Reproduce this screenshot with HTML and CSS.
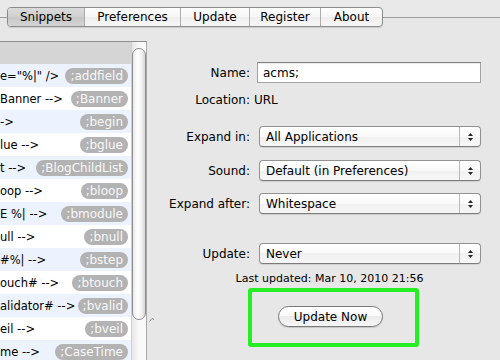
FILE: index.html
```html
<!DOCTYPE html>
<html>
<head>
<meta charset="utf-8">
<title>Snippets</title>
<link rel="stylesheet" href="styles.css">
</head>
<body>
<div class="window">
  <div class="box">
    <div class="tabs">
      <div class="tab t1 sel">Snippets</div>
      <div class="tab t2">Preferences</div>
      <div class="tab t3">Update</div>
      <div class="tab t4">Register</div>
      <div class="tab t5">About</div>
    </div>
    <div class="main">
      <div class="list">
        <div class="rows">
          <div class="row sel"></div>
          <div class="row"><span class="snip">e="%|" /&gt;</span><span class="pill">;addfield</span></div>
          <div class="row"><span class="snip">Banner --&gt;</span><span class="pill">;Banner</span></div>
          <div class="row"><span class="snip">-&gt;</span><span class="pill">;begin</span></div>
          <div class="row"><span class="snip">lue --&gt;</span><span class="pill">;bglue</span></div>
          <div class="row"><span class="snip">t --&gt;</span><span class="pill">;BlogChildList</span></div>
          <div class="row"><span class="snip">oop --&gt;</span><span class="pill">;bloop</span></div>
          <div class="row"><span class="snip">E %| --&gt;</span><span class="pill">;bmodule</span></div>
          <div class="row"><span class="snip">ull --&gt;</span><span class="pill">;bnull</span></div>
          <div class="row"><span class="snip">#%| --&gt;</span><span class="pill">;bstep</span></div>
          <div class="row"><span class="snip">ouch# --&gt;</span><span class="pill">;btouch</span></div>
          <div class="row"><span class="snip">alidator# --&gt;</span><span class="pill">;bvalid</span></div>
          <div class="row"><span class="snip">eil --&gt;</span><span class="pill">;bveil</span></div>
          <div class="row"><span class="snip">me --&gt;</span><span class="pill">;CaseTime</span></div>
        </div>
        <div class="scroll"><div class="thumb"></div></div>
      </div>
      <div class="splitter">
        <svg class="grip" width="6" height="5" viewBox="0 0 6 5"><path d="M0.5 4.5 L3 1.5 L5 2.5" fill="none" stroke="#8a8a8a" stroke-width="1"/></svg>
      </div>
      <div class="form">
        <div class="frow r-name">
          <div class="label">Name:</div>
          <div class="field">acms;</div>
        </div>
        <div class="frow r-loc">
          <div class="label">Location:</div>
          <div class="value">URL</div>
        </div>
        <div class="frow r-expand">
          <div class="label">Expand in:</div>
          <div class="popup"><div class="ptext">All Applications</div><div class="parrows"><svg width="7" height="10" viewBox="0 0 7 10"><path d="M1 4 L3.5 1 L6 4 Z M1 6 L3.5 9 L6 6 Z" fill="#222"/></svg></div></div>
        </div>
        <div class="frow r-sound">
          <div class="label">Sound:</div>
          <div class="popup"><div class="ptext">Default (in Preferences)</div><div class="parrows"><svg width="7" height="10" viewBox="0 0 7 10"><path d="M1 4 L3.5 1 L6 4 Z M1 6 L3.5 9 L6 6 Z" fill="#222"/></svg></div></div>
        </div>
        <div class="frow r-after">
          <div class="label">Expand after:</div>
          <div class="popup"><div class="ptext">Whitespace</div><div class="parrows"><svg width="7" height="10" viewBox="0 0 7 10"><path d="M1 4 L3.5 1 L6 4 Z M1 6 L3.5 9 L6 6 Z" fill="#222"/></svg></div></div>
        </div>
        <div class="frow r-update">
          <div class="label">Update:</div>
          <div class="popup"><div class="ptext">Never</div><div class="parrows"><svg width="7" height="10" viewBox="0 0 7 10"><path d="M1 4 L3.5 1 L6 4 Z M1 6 L3.5 9 L6 6 Z" fill="#222"/></svg></div></div>
        </div>
        <div class="last">Last updated: Mar 10, 2010 21:56</div>
        <div class="highlight">
          <div class="button">Update Now</div>
        </div>
      </div>
    </div>
  </div>
</div>
</body>
</html>
```
FILE: styles.css
```css
* { box-sizing: border-box; }
html, body { margin: 0; padding: 0; }
body {
  width: 500px;
  height: 360px;
  overflow: hidden;
  background: #e9e9e9;
  font-family: "DejaVu Sans", "Liberation Sans", sans-serif;
  font-size: 12px;
  color: #000;
}
.window { padding-top: 17px; }
.box {
  border-top: 1px solid #9d9d9d;
  background: #e7e7e7;
  height: 343px;
}
.tabs {
  display: flex;
  margin: -11px 0 0 7px;
  width: 376px;
  height: 20px;
  border: 1px solid #8c8c8c;
  border-radius: 4px;
  background: linear-gradient(#fefefe, #f6f6f6 50%, #eeeeee 50%, #f7f7f7);
  box-shadow: 0 1px 1px rgba(0,0,0,0.12);
  overflow: hidden;
}
.tab {
  display: flex;
  align-items: center;
  justify-content: center;
  border-left: 1px solid #acacac;
  height: 100%;
}
.tab.t1 { width: 76px; border-left: none; }
.tab.t2 { width: 96px; }
.tab.t3 { width: 69px; }
.tab.t4 { width: 71px; }
.tab.t5 { width: 62px; }
.tab.sel { background: linear-gradient(#dadada, #d0d0d0 50%, #c7c7c7 50%, #d3d3d3); }

.main { display: flex; margin-top: 14px; }

.list {
  width: 147px;
  height: 330px;
  display: flex;
  border-top: 1px solid #8e8e8e;
  background: #fff;
}
.rows { width: 131px; overflow: hidden; }
.row {
  height: 23px;
  display: flex;
  align-items: center;
  padding-right: 3px;
  white-space: nowrap;
  overflow: hidden;
}
.row.sel { height: 22px; background: #d5d5d5; }
.row:nth-child(even) { background: #edf3fe; }
.snip { flex: none; font-size: 11.5px; }
.pill {
  flex: none;
  margin-left: auto;
  height: 16px;
  line-height: 16px;
  padding: 0 5px;
  border-radius: 8px;
  background: #b3b3b3;
  color: #f8f8f8;
}
.scroll {
  width: 16px;
  padding-top: 6px;
  border-left: 1px solid #d0d0d0;
  border-right: 1px solid #a8a8a8;
  background: linear-gradient(90deg, #e6e6e6, #f8f8f8 45%, #fbfbfb);
}
.thumb {
  width: 14px;
  height: 272px;
  border: 1px solid #8d8d8d;
  border-radius: 7px;
  background: linear-gradient(90deg, #e9e9e9, #ffffff 35%, #f6f6f6 65%, #d8d8d8);
}
.splitter { width: 10px; padding: 276px 0 0 2px; }
.grip { display: block; }

.form { width: 343px; display: flex; flex-direction: column; }
.frow { display: flex; align-items: center; }
.label { width: 93px; text-align: right; flex: none; }
.r-name { margin-top: 21px; height: 21px; }
.r-loc { margin-top: 8px; height: 18px; }
.r-expand { margin-top: 17px; }
.r-sound { margin-top: 13px; }
.r-after { margin-top: 12px; }
.r-update { margin-top: 29px; }
.field {
  margin-left: 7px;
  width: 224px;
  height: 21px;
  border: 1px solid #a3a3a3;
  border-top-color: #7f7f7f;
  background: #fff;
  padding-left: 5px;
  display: flex;
  align-items: center;
  box-shadow: inset 0 1px 1px rgba(0,0,0,0.08);
}
.value { margin-left: 4px; }
.popup {
  margin-left: 9px;
  width: 222px;
  height: 21px;
  display: flex;
  align-items: stretch;
  border: 1px solid #929292;
  border-bottom-color: #7c7c7c;
  border-radius: 4px;
  background: linear-gradient(#ffffff, #f9f9f9 50%, #f0f0f0 50%, #f7f7f7);
  box-shadow: 0 1px 1px rgba(0,0,0,0.10);
}
.ptext { flex: 1; padding-left: 6px; display: flex; align-items: center; }
.parrows {
  width: 21px;
  border-left: 1px solid #b9b9b9;
  display: flex;
  align-items: center;
  justify-content: center;
}
.parrows svg { display: block; }
.last {
  margin-top: 8px;
  font-size: 11px;
  line-height: 14px;
  text-align: center;
  padding-left: 2px;
}
.highlight {
  margin-top: 2px;
  margin-left: 91px;
  width: 171px;
  height: 59px;
  border: 4px solid #25ee25;
  border-radius: 3px;
  padding: 14px 0 0 26px;
}
.button {
  width: 105px;
  height: 21px;
  border: 1px solid #7a7a7a;
  border-radius: 11px;
  background: linear-gradient(#ffffff, #f8f8f8 50%, #ececec 50%, #f6f6f6);
  box-shadow: 0 1px 1px rgba(0,0,0,0.15);
  display: flex;
  align-items: center;
  justify-content: center;
}
```
